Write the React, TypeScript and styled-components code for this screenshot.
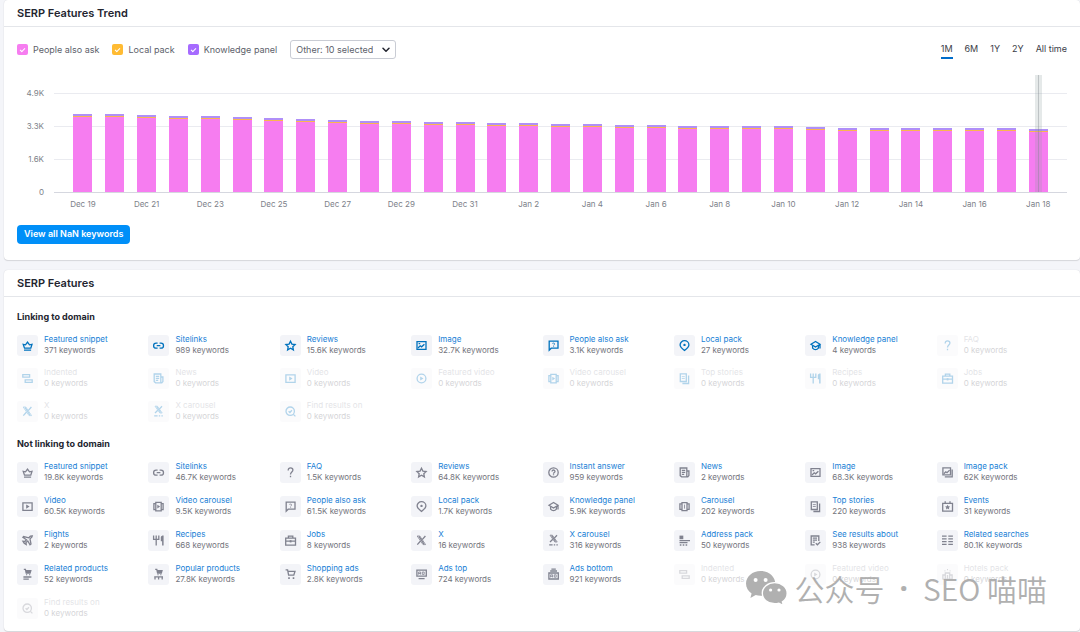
import React from 'react';
import styled, { createGlobalStyle, css } from 'styled-components';

const GlobalStyle = createGlobalStyle`
  *, *::before, *::after { box-sizing: border-box; }
  body {
    margin: 0;
    background: #f4f5f9;
    color: #23252f;
    font-family: Inter, "Liberation Sans", "Noto Sans CJK SC", sans-serif;
    font-size: 8px;
    line-height: 11px;
  }
`;

/* ---------- shell ---------- */

const Page = styled.main`
  display: flex;
  flex-direction: column;
  gap: 10px;
  padding: 0 0 1px 4px;
`;

const Card = styled.section`
  position: relative;
  background: #fff;
  border-radius: 4px;
  box-shadow: 0 0 1px 0 rgba(25, 27, 35, 0.16), 0 1px 1px 0 rgba(25, 27, 35, 0.12);
`;

const CardHeader = styled.header`
  display: flex;
  align-items: center;
  height: 27px;
  padding: 0 13px;
  border-bottom: 1px solid #e4e6ea;
`;

const CardTitle = styled.h2`
  margin: 0;
  font-size: 11px;
  line-height: 14px;
  font-weight: 600;
`;

const TrendBody = styled.div`
  padding: 13px 13px 16px;
`;

const FeaturesBody = styled.div`
  display: flex;
  flex-direction: column;
  gap: 16px;
  padding: 14px 12px 12px 13px;
`;

/* ---------- trend controls ---------- */

const Controls = styled.div`
  display: flex;
  align-items: center;
  justify-content: space-between;
  height: 19px;
`;

const Legend = styled.div`
  display: flex;
  align-items: center;
  gap: 13px;
`;

const CheckLabel = styled.label`
  display: flex;
  align-items: center;
  gap: 5px;
  font-size: 9px;
  line-height: 12px;
  color: #5d5f6b;
  white-space: nowrap;
`;

const Checkbox = styled.input<{ $color: string }>`
  appearance: none;
  display: grid;
  place-items: center;
  width: 11px;
  height: 11px;
  margin: 0;
  border-radius: 2px;
  background: #d1d4db;

  &:checked { background: ${(p) => p.$color}; }
  &:checked::after {
    content: '';
    width: 5px;
    height: 3px;
    border-left: 1px solid #fff;
    border-bottom: 1px solid #fff;
    transform: rotate(-45deg);
  }
`;

const SelectWrap = styled.div`
  display: grid;
  align-items: center;
`;

const Select = styled.select`
  grid-area: 1 / 1;
  appearance: none;
  height: 19px;
  padding: 0 22px 0 5px;
  border: 1px solid #c9ccd4;
  border-radius: 3px;
  background: #fff;
  color: #5d5f6b;
  font: inherit;
  font-size: 9px;
  line-height: 12px;
`;

const SelectArrow = styled.svg`
  grid-area: 1 / 1;
  justify-self: end;
  width: 8px;
  height: 6px;
  margin-right: 6px;
  pointer-events: none;
`;

const Periods = styled.div`
  display: flex;
  gap: 12px;
`;

const PeriodButton = styled.button<{ $active?: boolean }>`
  height: 19px;
  padding: 0;
  border: 0;
  border-bottom: 2px solid ${(p) => (p.$active ? '#006dca' : 'transparent')};
  background: none;
  color: #3b3d48;
  font: inherit;
  font-size: 9px;
  line-height: 12px;
`;

/* ---------- chart ---------- */

const Chart = styled.div`
  display: grid;
  grid-template-columns: 27px minmax(0, 1fr);
  column-gap: 10px;
  margin: 16px 0;
  line-height: 10px;
  color: #7d7f89;
`;

const YAxis = styled.div`
  display: flex;
  flex-direction: column;
  justify-content: space-between;
  text-align: right;
  padding-top: 13px;
  height: 122px;
  margin-bottom: -4px;
`;

const Plot = styled.div`
  display: grid;
  height: 118px;
  > * { grid-area: 1 / 1; }
`;

const GridLines = styled.div`
  display: flex;
  flex-direction: column;
  justify-content: space-between;
  padding-top: 18px;
`;

const GridLine = styled.div<{ $axis?: boolean }>`
  height: 1px;
  background: ${(p) => (p.$axis ? '#d5d7df' : '#eaebf0')};
`;

const Series = styled.div`
  display: flex;
  padding: 0 13px;
`;

const Slot = styled.div`
  position: relative;
  flex: 1;
  min-width: 0;
  display: flex;
  align-items: flex-end;
  justify-content: center;
  padding-bottom: 1px;
`;

const Bar = styled.div`
  width: 19px;
  border-top: 2px solid #b08ff8;
  background: #f67df0;

  &::before {
    content: '';
    display: block;
    height: 1px;
    background: #fab64e;
  }
`;

const Cursor = styled.div`
  position: absolute;
  top: 0;
  bottom: 1px;
  left: calc(50% - 3px);
  width: 7px;
  border: solid rgba(138, 155, 155, 0.22);
  border-width: 0 3px;
  background: rgba(125, 135, 140, 0.5);
  background-clip: padding-box;
`;

const XAxis = styled.div`
  grid-column: 2;
  display: flex;
  height: 16px;
  padding: 6px 13px 0;
`;

const XLabel = styled.div`
  flex: 1;
  min-width: 0;
  display: flex;
  justify-content: center;
  white-space: nowrap;
`;

const PrimaryButton = styled.button`
  display: block;
  height: 19px;
  padding: 0 7px 2px;
  border: 0;
  border-radius: 4px;
  background: #008ff8;
  color: #fff;
  font: inherit;
  font-size: 9px;
  line-height: 12px;
  font-weight: 600;
`;

/* ---------- features ---------- */

const GroupTitle = styled.h3`
  margin: 0 0 11px;
  font-size: 9px;
  line-height: 12px;
  font-weight: 700;
`;

const FeatureGrid = styled.div<{ $gap: number }>`
  display: grid;
  grid-template-columns: repeat(8, minmax(0, 1fr));
  row-gap: ${(p) => p.$gap}px;
`;

const Feature = styled.div<{ $disabled: boolean }>`
  display: flex;
  align-items: flex-end;
  gap: 6px;
  height: 22px;
  white-space: nowrap;
  ${(p) => p.$disabled && css`opacity: 0.3;`}
`;

const IconBox = styled.span<{ $linked: boolean }>`
  display: grid;
  place-items: center;
  flex: none;
  width: 21px;
  height: 21px;
  border-radius: 3px;
  background: #f3f4f8;
  color: ${(p) => (p.$linked ? '#0072bd' : '#80828f')};
`;

const Glyph = styled.svg`
  display: block;
  width: 11px;
  height: 11px;
  overflow: visible;
  fill: none;
  stroke: currentColor;
  stroke-width: 1.3;

  .solid { fill: currentColor; stroke: none; }
  .thin { stroke-width: 0.8; }
`;

const FeatureText = styled.div`
  display: flex;
  flex-direction: column;
`;

const FeatureLink = styled.a`
  color: #1a7fd6;
  text-decoration: none;
`;

const FeatureName = styled.span`
  color: #a4a6b0;
`;

const Count = styled.span`
  color: #73747c;
`;

/* ---------- watermark ---------- */

const Watermark = styled.div`
  position: absolute;
  right: 33px;
  bottom: 23px;
  display: flex;
  align-items: center;
  gap: 8px;
  color: #aaa;
  opacity: 0.92;
  font-family: "Noto Sans CJK SC", sans-serif;
  font-size: 30px;
  line-height: 40px;
  font-weight: 350;
  white-space: nowrap;
  pointer-events: none;
`;

const WatermarkText = styled.div`
  display: flex;
  gap: 15px;
`;

const Dot = styled.span`
  font-family: "Noto Sans", sans-serif;
  font-weight: 700;
`;

/* ---------- icons ---------- */

const question = <path d="M3.2 3.4C3.2 1.6 4.1.9 5.5.9s2.4.8 2.4 2.2c0 1.9-2.4 2-2.4 4.3M5.5 8.7v1.5" />;

const icons: Record<string, React.ReactNode> = {
  crown: <path d="m1.2 4.3 2.3.5 2-2.8 2 2.8 2.5-.5-1.2 3.900H2.500zM2 10.200h7.100" />,
  link: <path d="M4.600 3.200H3.100a2.500 2.500 0 0 0 0 5h1.500M6.600 3.200H8a2.500 2.500 0 0 1 0 5H6.600M3.700 5.700h3.700" />,
  star: <path d="m5.500 1.200 1.400 2.900 3.200.4L7.800 6.700l.6 3.200-2.900-1.600-2.900 1.600.6-3.200L.9 4.500l3.200-.4z" />,
  image: (
    <>
      <path d="M1 1.600h9v7.800H1z" />
      <path d="m2 8 2.200-2.200 1.400 1 2.800-2.600M2.600 3.700h1.600" />
    </>
  ),
  ask: (
    <>
      <path d="M1.200 10.200V1.200h8.800v7H3.200z" />
      <path className="thin" d="M4.300 3.600c.2-.7 2.400-.8 2.400.4 0 .8-1.100.7-1.100 1.500M5.600 6.200v.7" />
    </>
  ),
  pin: (
    <>
      <path d="M5.500 10.400C2.600 8.200 1.100 6.900 1.100 4.900a4.400 4.200 0 0 1 8.800 0c0 2-1.500 3.300-4.400 5.500z" />
      <circle className="solid" cx="5.500" cy="4.900" r="1.200" />
    </>
  ),
  cap: (
    <>
      <path d="M5.500 1.500 1 4.300l4.500 2.800L10 4.300zM10 4.300v4.200" />
      <path d="M2.600 5.600v2.600c1.600 1.900 4.200 1.900 5.800 0V5.600" />
    </>
  ),
  faq: question,
  indented: <path d="M.8 1.600h6.800v2.600H.8zM3.200 6.800h7v2.600h-7z" />,
  news: (
    <>
      <path d="M1.200 1h6.600v8.800H2.600L1.200 8.600zM7.800 4h2.100v4.600L8.800 9.800H7" />
      <path d="M2.800 3.400h3.400M2.800 5.400h3.400M2.800 7.400h2.400" />
    </>
  ),
  video: (
    <>
      <path d="M.9 1.800h9.200v7.600H.9z" />
      <path className="solid" d="M4.200 3.500v4.200l3.400-2.100z" />
    </>
  ),
  play: (
    <>
      <circle cx="5.500" cy="5.500" r="4.400" />
      <path className="solid" d="M4.200 3.400v4.200l3.300-2.100z" />
    </>
  ),
  videoCarousel: (
    <>
      <path d="M2.800 1.300h5.400v8.600H2.800zM2.800 2.600H.9v6h1.900M8.200 2.600h1.900v6H8.200" />
      <path className="solid" d="M4.300 3.800v3.600l2.800-1.800z" />
    </>
  ),
  carousel: (
    <>
      <path d="M3 1.600h5v8H3zM3 2.800H.9v5.600H3M8 2.800h2.100v5.600H8" />
      <path className="thin" d="M5.500 3.600v4" />
    </>
  ),
  stories: (
    <>
      <path d="M1.300.9h6v7.600h-6zM9.600 2.600v7.900H3.400" />
      <path className="thin" d="M2.800 3.600h3M2.800 5.500h3" />
    </>
  ),
  recipes: (
    <>
      <path d="M.6.6v3.800h5.200V.6M3.200.6v9.800" />
      <path className="solid" d="M10.600.6v9.800H9.100V6.200H7.800V2.400C7.800 1 9 .6 10.600.6z" />
    </>
  ),
  jobs: (
    <>
      <path d="M.7 3.100h9.800v7H.7zM3.400 3V1.200h4.400V3M.8 6.200h9.600" />
      <path className="solid" d="M4.700 5.200h1.800v2.200H4.700z" />
    </>
  ),
  x: (
    <>
      <path className="thin" d="M1.200 1h2.600l5.800 8.600H7z" />
      <path d="M9.400 1 6.200 4.600M4.600 6 1.300 9.600M3 1.400 7.900 9" />
    </>
  ),
  xCarousel: (
    <>
      <path className="thin" d="M2 .2h2.400L9.200 7H6.800z" />
      <path d="M9 .2 6.300 3.100M4.800 4.200 2 7M3.600.5l4 6" />
      <path d="M1.200 9.800h3.400M5.800 9.800h1.400M8.400 9.800h1.400" />
    </>
  ),
  find: (
    <>
      <circle cx="5.200" cy="5.200" r="4.200" />
      <path d="m8.400 8.400 2 2M3.600 5.300l1.300 1.200 2-2.200" />
    </>
  ),
  instant: (
    <>
      <circle cx="5.500" cy="5.500" r="4.700" />
      <path d="M4 4.500c0-2 3-2 3 0 0 1.100-1.500 1-1.500 2.200M5.500 7.300v1" />
    </>
  ),
  imagePack: (
    <>
      <path d="M.9.9h7.600v6.900H.9zM10.200 2.400v7.400H2.800" />
      <path d="m1.800 6.800 2-2 1.200.9 2.600-2.600" />
    </>
  ),
  events: (
    <>
      <path d="M.7 2.300h9.800v7.900H.7zM3.200.2v2.400M8 .2v2.400" />
      <path className="solid" d="m5.600 3.700.8 1.600 1.700.2-1.200 1.200.3 1.700-1.600-.8-1.600.8.3-1.700-1.200-1.200 1.700-.2z" />
    </>
  ),
  flights: (
    <path d="M10.200 1 8.400 1.200 6.800 2.800 1.600 1.500.9 2.400l3.600 2.400-1.700 1.700-1.800-.2 1.200 1.900 2 1.300-.2-1.900 1.800-1.600 2.200 3.800 1-.8-1-5.100 1.800-1.800z" />
  ),
  address: (
    <>
      <path className="solid" d="M.5.6h3.800v3.600H.5z" />
      <path d="M.5 5.600H11M.5 7.700h8M.8 10h1.600M3.700 10h1.600M6.600 10h1.600" />
    </>
  ),
  results: (
    <>
      <path d="M4.600 9.900H1.200V1h7.600v5" />
      <path d="M2.800 3.200H7M2.800 5.200H7M2.800 7.200h2M5.800 8.300 7.400 9.800l2.900-2.900" />
    </>
  ),
  related: <path d="M0 1.200h4.600M0 3.900h4.600M0 6.600h4.600M0 9.300h4.600M6.300 1.200h4.600M6.300 3.900h4.600M6.300 6.600h4.600M6.300 9.300h4.600" />,
  relatedProducts: (
    <>
      <path d="M1.800.3h1.600l.8 3.800h3.900l.7-2.500H3.800M3.800 2.800h4.600" />
      <path className="solid" d="M4 5.300h1.200v1H4zM7 5.300h1.200v1H7z" />
      <path d="M1.400 8h8M1.400 10.200h5.400" />
    </>
  ),
  popularProducts: (
    <>
      <path d="M2.200.3h1.600l.8 3.800h3.700l.7-2.500H4.200M4.200 2.800h4.400" />
      <path className="solid" d="M4.400 5.300h1.200v1H4.400zM7.200 5.300h1.200v1H7.200z" />
      <path d="M1.200 7.900h8.800M2 8v2.600M5.600 8v2.600M9.200 8v2.600" />
    </>
  ),
  cart: (
    <>
      <path d="M.6.8h2l1 5.400h5.200L10 2.300H3" />
      <path className="solid" d="M3.200 8.200h1.600v1.700H3.200zM7.700 8.200h1.600v1.700H7.700z" />
    </>
  ),
  adsTop: (
    <>
      <path d="M.9 1.200h9.400v6H.9zM2.600 9.700h6" />
      <path className="thin" d="M2.600 5.600V3h2v2.600M2.600 4.500h2M6.300 3h1.900v2.400H6.300z" />
    </>
  ),
  adsBottom: (
    <>
      <path d="M.9 4h9.400v6H.9zM2.200 2h6.800M3.400.2h4.400" />
      <path className="thin" d="M2.600 8.400V5.800h2v2.600M2.600 7.300h2M6.300 5.800h1.900v2.400H6.300z" />
    </>
  ),
  hotels: (
    <>
      <path d="M.9 10V6h2.400M10.100 10V6H7.700M3.300 10V4h4.400v6M.4 10.100h10.200" />
      <path d="M5.500 10V6M2.500 1.900h.9M5 .6h1M7.600 1.900h.9" />
    </>
  ),
};

/* ---------- data ---------- */

type Item = { icon: string; name: string; count: string };

const item = (icon: string, name: string, count = '0'): Item => ({ icon, name, count });

const linking: Item[] = [
  item('crown', 'Featured snippet', '371'),
  item('link', 'Sitelinks', '989'),
  item('star', 'Reviews', '15.6K'),
  item('image', 'Image', '32.7K'),
  item('ask', 'People also ask', '3.1K'),
  item('pin', 'Local pack', '27'),
  item('cap', 'Knowledge panel', '4'),
  item('faq', 'FAQ'),
  item('indented', 'Indented'),
  item('news', 'News'),
  item('video', 'Video'),
  item('play', 'Featured video'),
  item('videoCarousel', 'Video carousel'),
  item('stories', 'Top stories'),
  item('recipes', 'Recipes'),
  item('jobs', 'Jobs'),
  item('x', 'X'),
  item('xCarousel', 'X carousel'),
  item('find', 'Find results on'),
];

const notLinking: Item[] = [
  item('crown', 'Featured snippet', '19.8K'),
  item('link', 'Sitelinks', '46.7K'),
  item('faq', 'FAQ', '1.5K'),
  item('star', 'Reviews', '64.8K'),
  item('instant', 'Instant answer', '959'),
  item('news', 'News', '2'),
  item('image', 'Image', '68.3K'),
  item('imagePack', 'Image pack', '62K'),
  item('video', 'Video', '60.5K'),
  item('videoCarousel', 'Video carousel', '9.5K'),
  item('ask', 'People also ask', '61.5K'),
  item('pin', 'Local pack', '1.7K'),
  item('cap', 'Knowledge panel', '5.9K'),
  item('carousel', 'Carousel', '202'),
  item('stories', 'Top stories', '220'),
  item('events', 'Events', '31'),
  item('flights', 'Flights', '2'),
  item('recipes', 'Recipes', '668'),
  item('jobs', 'Jobs', '8'),
  item('x', 'X', '16'),
  item('xCarousel', 'X carousel', '316'),
  item('address', 'Address pack', '50'),
  item('results', 'See results about', '938'),
  item('related', 'Related searches', '80.1K'),
  item('relatedProducts', 'Related products', '52'),
  item('popularProducts', 'Popular products', '27.8K'),
  item('cart', 'Shopping ads', '2.8K'),
  item('adsTop', 'Ads top', '724'),
  item('adsBottom', 'Ads bottom', '921'),
  item('indented', 'Indented'),
  item('play', 'Featured video'),
  item('hotels', 'Hotels pack'),
  item('find', 'Find results on'),
];

// Daily bar heights from Dec 19 to Jan 18; 33px of plot height is one grid step.
const totals = [
  78, 78, 77, 76, 76, 75, 74, 73, 72, 71, 71, 70, 70, 69, 69, 68,
  68, 67, 67, 66, 66, 66, 66, 65, 64, 64, 64, 64, 64, 64, 63,
];

const dayLabel = (i: number) => (i < 13 ? `Dec ${19 + i}` : `Jan ${i - 12}`);

const legend = [
  { name: 'People also ask', color: '#f67df0' },
  { name: 'Local pack', color: '#ffbb33' },
  { name: 'Knowledge panel', color: '#a66bff' },
];

const periods = ['1M', '6M', '1Y', '2Y', 'All time'];

/* ---------- parts ---------- */

function FeatureGroup({ title, items, gap, linked = false }: {
  title: string;
  items: Item[];
  gap: number;
  linked?: boolean;
}) {
  return (
    <div>
      <GroupTitle>{title}</GroupTitle>
      <FeatureGrid $gap={gap}>
        {items.map(({ icon, name, count }) => (
          <Feature key={name} $disabled={count === '0'}>
            <IconBox $linked={linked}>
              <Glyph viewBox="0 0 11 11" aria-hidden="true">{icons[icon]}</Glyph>
            </IconBox>
            <FeatureText>
              {count === '0'
                ? <FeatureName>{name}</FeatureName>
                : <FeatureLink href="#">{name}</FeatureLink>}
              <Count>{count} keywords</Count>
            </FeatureText>
          </Feature>
        ))}
      </FeatureGrid>
    </div>
  );
}

function TrendChart() {
  return (
    <Chart>
      <YAxis>
        {['4.9K', '3.3K', '1.6K', '0'].map((v) => <span key={v}>{v}</span>)}
      </YAxis>
      <Plot>
        <GridLines>
          <GridLine />
          <GridLine />
          <GridLine />
          <GridLine $axis />
        </GridLines>
        <Series>
          {totals.map((height, i) => (
            <Slot key={i}>
              <Bar style={{ height }} />
              {i === totals.length - 1 && <Cursor />}
            </Slot>
          ))}
        </Series>
      </Plot>
      <XAxis>
        {totals.map((_, i) => (
          <XLabel key={i}>{i % 2 === 0 ? dayLabel(i) : null}</XLabel>
        ))}
      </XAxis>
    </Chart>
  );
}

export default function App() {
  return (
    <>
      <GlobalStyle />
      <Page>
        <Card>
          <CardHeader><CardTitle>SERP Features Trend</CardTitle></CardHeader>
          <TrendBody>
            <Controls>
              <Legend>
                {legend.map(({ name, color }) => (
                  <CheckLabel key={name}>
                    <Checkbox type="checkbox" defaultChecked $color={color} />
                    {name}
                  </CheckLabel>
                ))}
                <SelectWrap>
                  <Select aria-label="Other features">
                    <option>Other: 10 selected</option>
                  </Select>
                  <SelectArrow viewBox="0 0 8 6" aria-hidden="true">
                    <path d="m1 1.300 3 3 3-3" fill="none" stroke="#23252f" strokeWidth="1.500" strokeLinecap="round" strokeLinejoin="round" />
                  </SelectArrow>
                </SelectWrap>
              </Legend>
              <Periods>
                {periods.map((p) => (
                  <PeriodButton key={p} type="button" $active={p === '1M'}>{p}</PeriodButton>
                ))}
              </Periods>
            </Controls>
            <TrendChart />
            <PrimaryButton type="button">View all NaN keywords</PrimaryButton>
          </TrendBody>
        </Card>

        <Card>
          <CardHeader><CardTitle>SERP Features</CardTitle></CardHeader>
          <FeaturesBody>
            <FeatureGroup title="Linking to domain" items={linking} gap={11} linked />
            <FeatureGroup title="Not linking to domain" items={notLinking} gap={12} />
          </FeaturesBody>
          <Watermark>
            <svg width="41" height="35" viewBox="0 0 41 35" aria-hidden="true">
              <path fill="currentColor" d="M14.600 0C6.500 0 0 5.500 0 12.600c0 4.100 2.200 7.700 5.600 10L4.400 27l5.300-2.900c1.600.5 3.200.7 4.900.7C22.700 24.800 29.300 19.500 29.300 12.600S22.700 0 14.600 0z" />
              <circle cx="9.600" cy="9" r="2" fill="#fff" />
              <circle cx="19.600" cy="9" r="2" fill="#fff" />
              <path fill="currentColor" stroke="#fff" strokeWidth="1.400" d="M28.700 11.600c-6.900 0-12.400 4.700-12.400 10.600s5.500 10.600 12.400 10.600c1.500 0 2.900-.2 4.200-.6l4.600 2.400-1.100-3.800c2.900-1.900 4.800-5 4.800-8.600 0-5.900-5.600-10.600-12.500-10.600z" />
              <circle cx="24.600" cy="19" r="1.600" fill="#fff" />
              <circle cx="33" cy="19" r="1.600" fill="#fff" />
            </svg>
            <WatermarkText>
              <span>公众号</span>
              <Dot>·</Dot>
              <span>SEO 喵喵</span>
            </WatermarkText>
          </Watermark>
        </Card>
      </Page>
    </>
  );
}
